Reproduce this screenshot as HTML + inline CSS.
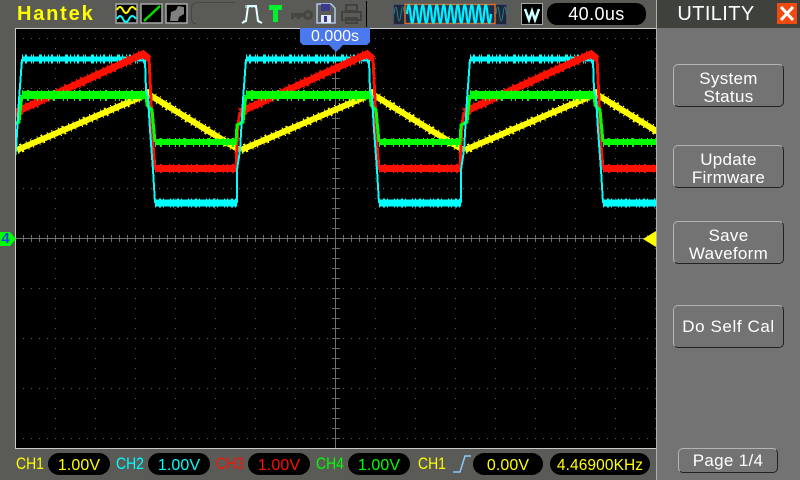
<!DOCTYPE html>
<html>
<head>
<meta charset="utf-8">
<style>
html,body{margin:0;padding:0;background:#5a5b56;}
#r{position:relative;width:800px;height:480px;overflow:hidden;background:#5a5b56;font-family:"Liberation Sans",sans-serif;color:#fff;}
#r div{position:absolute;box-sizing:border-box;white-space:nowrap;}
.pill{background:#000;border-radius:11px;height:22px;top:453px;text-align:center;font-size:16px;line-height:26px;letter-spacing:.1px;}
.lab{top:454px;font-size:17px;line-height:20px;transform:scaleX(.82);transform-origin:0 0;}
.btn{left:673px;width:111px;height:43px;background:#737373;border:1.5px solid;border-color:#b4b4b4 #222 #222 #b4b4b4;border-radius:5px;text-align:center;font-size:17px;line-height:18px;letter-spacing:.3px;color:#fff;}
</style>
</head>
<body>
<div id="r">
<div style="left:15px;top:28px;width:642px;height:421px;background:#000;border:1px solid #c8c8c8;border-right:0;"></div>

<svg style="position:absolute;left:0;top:0" width="800" height="480" viewBox="0 0 800 480">
<defs>
<pattern id="pr" x="7" y="38" width="8" height="50" patternUnits="userSpaceOnUse"><rect width="1" height="1" fill="#606060"/></pattern>
<pattern id="pc" x="15" y="8" width="40" height="10" patternUnits="userSpaceOnUse"><rect width="1" height="1" fill="#606060"/></pattern>
<pattern id="tx" x="7" y="0" width="8" height="10" patternUnits="userSpaceOnUse"><rect width="1" height="10" fill="#6a6a6a"/></pattern>
<pattern id="ty" x="0" y="8" width="10" height="10" patternUnits="userSpaceOnUse"><rect width="10" height="1" fill="#6a6a6a"/></pattern>
<clipPath id="scr"><rect x="16" y="29" width="640" height="419"/></clipPath>
<g id="yel" fill="none" stroke="#ffff00">
<path d="M17 150L148 94L153 97L236 148L241 150" stroke-width="6"/>
<path d="M17 150L148 94L153 97L236 148L241 150" stroke-width="9" stroke-dasharray="1 3 2 5 1 4 1 6"/>
</g>
<g id="cya" fill="none" stroke="#00ffff">
<path d="M22 59H146" stroke-width="5"/>
<path d="M22 59H146" stroke-width="9" stroke-dasharray="1 2 2 4 1 1 1 5 3 2 1 3"/>
<path d="M155 203H237" stroke-width="7"/>
<path d="M155 203H237" stroke-width="9" stroke-dasharray="1 3 2 2 1 6 1 2"/>
</g>
<g id="red" fill="none" stroke="#ff1000">
<path d="M16 112L143 54L149 59" stroke-width="7"/>
<path d="M16 112L143 54" stroke-width="10" stroke-dasharray="1 3 2 6 1 4"/>
<path d="M149 58L151 100L153 145L155 168H236L238 125L240 112" stroke-width="3"/>
<path d="M155 168.500H237" stroke-width="7"/>
<path d="M155 168.500H237" stroke-width="9" stroke-dasharray="1 4 2 7 1 3"/>
</g>
<g id="gre" fill="none" stroke="#00ff00">
<path d="M22 95H146" stroke-width="8"/>
<path d="M22 95.500H146" stroke-width="11" stroke-dasharray="1 4 2 8 1 3 1 6"/>
<path d="M146 95L147 105L152 110L155 142" stroke-width="3"/>
<path d="M155 142H237" stroke-width="6"/>
<path d="M155 142.500H237" stroke-width="9" stroke-dasharray="1 4 2 7 1 5 1 3"/>
<path d="M236 142L237 125L243 122L246 95" stroke-width="3"/>
</g>
<g id="cyt" fill="none" stroke="#00ffff" stroke-width="2">
<path d="M145 60L146 90L148 97L150 130L153 170L155 203"/>
<path d="M237 203L237 170L240 150L243 100L246 59"/>
</g>
</defs>

<rect x="16" y="38" width="640" height="401" fill="url(#pr)"/>
<rect x="16" y="29" width="640" height="419" fill="url(#pc)"/>
<rect x="16" y="235" width="640" height="7" fill="url(#tx)"/>
<rect x="332" y="29" width="8" height="419" fill="url(#ty)"/>
<rect x="16" y="238" width="640" height="1" fill="#6f6f6f"/>
<rect x="335" y="29" width="1" height="419" fill="#6f6f6f"/>

<g clip-path="url(#scr)" shape-rendering="crispEdges">
<use href="#yel" x="-224"/><use href="#yel"/><use href="#yel" x="224"/><use href="#yel" x="448"/>
<use href="#cya" x="-224"/><use href="#cya"/><use href="#cya" x="224"/><use href="#cya" x="448"/>
<use href="#red" x="-224"/><use href="#red"/><use href="#red" x="224"/><use href="#red" x="448"/>
<use href="#gre" x="-224"/><use href="#gre"/><use href="#gre" x="224"/><use href="#gre" x="448"/>
<use href="#cyt" x="-224"/><use href="#cyt"/><use href="#cyt" x="224"/><use href="#cyt" x="448"/>
</g>

<path d="M300 28H370V42L367 45H343L336 52L329 45H303L300 42Z" fill="#4a78ee"/>
<path d="M0 232H10L16 239L10 246H0Z" fill="#00ff00"/>
<path d="M643 239L656 231V247Z" fill="#ffff00"/>

<!-- top icons -->
<rect x="116" y="4" width="21" height="19" fill="#000" stroke="#a8a8a8" stroke-width="1.5"/>
<path d="M117 10q3 -6 6 0t6 0t7 0" fill="none" stroke="#ffff00" stroke-width="2"/>
<path d="M117 19q3 -6 6 0t6 0t7 0" fill="none" stroke="#00ffff" stroke-width="2"/>
<rect x="141" y="4" width="21" height="19" fill="#000" stroke="#a8a8a8" stroke-width="1.5"/>
<path d="M144 21L160 6" stroke="#00e000" stroke-width="2.500"/>
<rect x="166" y="4" width="21" height="19" fill="#000" stroke="#a8a8a8" stroke-width="1.5"/>
<path d="M170 21L171 12L176 10L178 6L184 7L184 14L179 17L178 21Z" fill="#808080"/>
<path d="M235 2.500H198Q191.500 2.500 191.500 9V18Q191.500 24 197 24" fill="none" stroke="#464743" stroke-width="1"/>
<path d="M242 23L246 21L248 6H256L258 21L262 23" fill="none" stroke="#e8ffff" stroke-width="2"/>
<path d="M246 5v3M249 5v3M252 5v3M255 5v3M244 20v3M259 20v3" stroke="#c8ffff" stroke-width="1"/>
<path d="M269 5H282V10H278V22H273V10H269Z" fill="#00f030"/>
<circle cx="308" cy="15" r="3.500" fill="none" stroke="#45463f" stroke-width="3"/>
<path d="M291 13H304V17H300V19H297V17H294V19H291Z" fill="#45463f"/>
<path d="M317 4H331L335 8V23H317Z" fill="#5a5b56" stroke="#b0c8f0" stroke-width="1.500"/>
<rect x="321" y="4" width="9" height="7" fill="#3a3a8a"/>
<rect x="321" y="15" width="10" height="8" fill="#e0e8ff"/>
<rect x="324" y="16" width="3" height="6" fill="#3a3a8a"/>
<path d="M346 5H357V11H346ZM342 12H361V20H342ZM346 18H357V23H346Z" fill="none" stroke="#42433e" stroke-width="2"/>
<rect x="366" y="1" width="1" height="26" fill="#000"/>

<rect x="393.500" y="4.500" width="113" height="20" fill="#202838" stroke="#44507a"/>
<path d="M394 14q1.750 -14 3.500 0t3.500 0t3.500 0" fill="none" stroke="#2a8088" stroke-width="1"/>
<path d="M496 14q1.750 -14 3.500 0t3.500 0t3.500 0" fill="none" stroke="#2a8088" stroke-width="1"/>
<rect x="405" y="4.500" width="90" height="19" fill="#103050" stroke="#e06a20" stroke-width="1.500"/>
<path d="M407 14q1.750 -18 3.500 0t3.500 0t3.500 0t3.500 0t3.500 0t3.500 0t3.500 0t3.500 0t3.500 0t3.500 0t3.500 0t3.500 0t3.500 0t3.500 0t3.500 0t3.500 0t3.500 0t3.500 0t3.500 0t3.500 0t3.500 0t3.500 0t3.500 0t3.500 0" fill="none" stroke="#00f0ff" stroke-width="2.200"/>
<rect x="521.500" y="3.500" width="21" height="21" fill="#000" stroke="#a8a8a8"/>
<path d="M525 9L529 20L532 11L535 20L539 9" fill="none" stroke="#d0ffff" stroke-width="2.500"/>

<!-- panel -->
<rect x="657" y="0" width="143" height="480" fill="#737373"/>
<rect x="656" y="0" width="1" height="480" fill="#b0b0b0"/>
<rect x="657" y="0" width="143" height="28" fill="#3f413d"/>
<rect x="777" y="3" width="20" height="21" fill="#f04a10"/>
<path d="M781 7L793 20M793 7L781 20" stroke="#fff" stroke-width="3"/>
<!-- slope -->
<path d="M453 472H460L465 456H471" fill="none" stroke="#8ac8ff" stroke-width="1.500"/>
</svg>

<div style="left:17px;top:2px;width:80px;font-size:20px;line-height:24px;font-weight:bold;color:#ffff00;letter-spacing:1.8px;">Hantek</div>
<div style="left:547px;top:3px;width:99px;height:22px;background:#000;border-radius:10px;text-align:center;font-size:18px;line-height:23px;letter-spacing:.4px;">40.0us</div>
<div style="left:300px;top:28px;width:70px;text-align:center;font-size:16px;line-height:18px;letter-spacing:0;">0.000s</div>
<div style="left:660px;top:1px;width:112px;text-align:center;font-size:20px;line-height:26px;letter-spacing:.4px;">UTILITY</div>
<div style="left:0;top:231px;width:11px;text-align:center;font-size:15px;line-height:16px;font-weight:bold;color:#2040e0;">4</div>

<div class="btn" style="top:64px;padding-top:5px;">System<br>Status</div>
<div class="btn" style="top:145px;padding-top:5px;">Update<br>Firmware</div>
<div class="btn" style="top:221px;padding-top:5px;">Save<br>Waveform</div>
<div class="btn" style="top:305px;padding-top:12px;letter-spacing:.6px;">Do Self Cal</div>
<div class="btn" style="left:678px;width:100px;top:448px;height:25px;line-height:24px;">Page 1/4</div>

<div class="lab" style="left:16px;color:#ffff00;">CH1</div>
<div class="pill" style="left:48px;width:62px;color:#ffff00;">1.00V</div>
<div class="lab" style="left:116px;color:#00ffff;">CH2</div>
<div class="pill" style="left:148px;width:62px;color:#00ffff;">1.00V</div>
<div class="lab" style="left:216px;color:#ff1000;">CH3</div>
<div class="pill" style="left:248px;width:62px;color:#ff1000;">1.00V</div>
<div class="lab" style="left:316px;color:#00ff00;">CH4</div>
<div class="pill" style="left:348px;width:62px;color:#00ff00;">1.00V</div>
<div class="lab" style="left:418px;color:#ffff00;">CH1</div>
<div class="pill" style="left:473px;width:70px;color:#ffff00;">0.00V</div>
<div class="pill" style="left:550px;width:100px;color:#ffff00;font-size:15.500px;">4.46900KHz</div>
</div>
</body>
</html>
